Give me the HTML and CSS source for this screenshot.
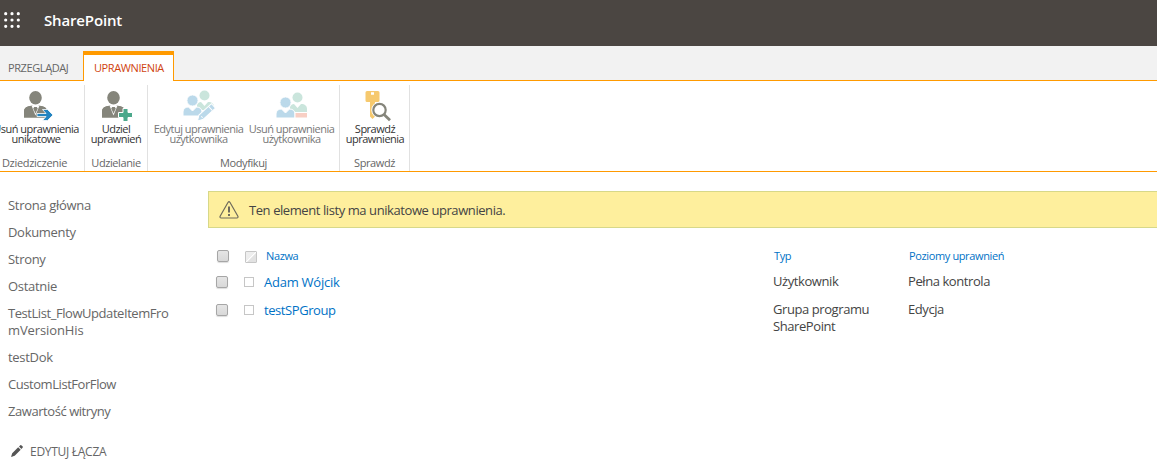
FILE: index.html
```html
<!DOCTYPE html>
<html lang="pl">
<head>
<meta charset="utf-8">
<title>SharePoint</title>
<link rel="stylesheet" href="styles.css">
</head>
<body>
<svg class="defs" width="0" height="0" aria-hidden="true">
  <symbol id="person" viewBox="0 0 23 28">
    <ellipse cx="11.500" cy="6.800" rx="6.300" ry="6.800"/>
    <path d="M0 26.500v-6c0-3 1.700-4.600 4.700-5.300l4-.7 2.800 8 2.800-8 4 .7c3 .7 4.700 2.300 4.700 5.300v6z"/>
    <path d="M0 26.500v-6c0-3 1.700-4.600 4.700-5.300l2.800-.5 4 9.500 4-9.500 2.800.5c3 .7 4.700 2.300 4.700 5.300v6z"/>
    <path d="M7.500 14.500h8l-4 10z" fill="#fff"/>
    <path d="M10.200 16h2.600l1 1.500-2.300 5-2.300-5z"/>
  </symbol>
  <symbol id="people" viewBox="0 0 32 28">
    <g fill="#cae5dc"><circle cx="21.500" cy="5.500" r="5"/><path d="M14 20v-5c1-2 2-3 4-3l3.500 4 3.500-4c4 0 6 2 6 5v3z"/></g>
    <g fill="#bbd9ea"><circle cx="9.500" cy="10.500" r="5.600" stroke="#fff"/><path stroke="#fff" d="M0 26v-4c0-3 2-5 5.500-5l4 4 4-4c3.500 0 5.500 2 5.500 5v4z"/></g>
  </symbol>
</svg>
<header class="suite">
  <svg class="waffle" width="16" height="16" viewBox="0 0 16 16" fill="none" stroke="#fff" stroke-width="3.200" stroke-linecap="round"><path d="M1.700 1.700h0M8 1.700h0M14.300 1.700h0M1.700 8h0M8 8h0M14.300 8h0M1.700 14.300h0M8 14.300h0M14.300 14.300h0"/></svg>
  <span class="brand">SharePoint</span>
</header>
<nav class="tabs">
  <span class="tab">PRZEGLĄDAJ</span>
  <span class="tab active">UPRAWNIENIA</span>
</nav>
<section class="ribbon">
  <div class="group g1">
    <div class="commands">
      <div class="command">
        <svg class="icon" width="34" height="32" viewBox="0 0 34 32"><use href="#person" x="3" y="1" width="23" height="28" fill="#85857b"/><path d="M16 23.500h9l-3.500-4h5l5.500 5.500-5.500 5.500h-5l3.500-4H16z" fill="#2384c0" stroke="#fff" stroke-width=".8"/></svg>
        <span class="label">Usuń uprawnienia<br>unikatowe</span>
      </div>
    </div>
    <div class="caption">Dziedziczenie</div>
  </div>
  <div class="group g2">
    <div class="commands">
      <div class="command">
        <svg class="icon" width="34" height="32" viewBox="0 0 34 32"><use href="#person" x="3" y="1" width="23" height="28" fill="#85857b"/><path d="M24 18.500h5v4h4.500v5H29v4h-5v-4h-4.500v-5H24z" fill="#4ba88b" stroke="#fff"/></svg>
        <span class="label">Udziel<br>uprawnień</span>
      </div>
    </div>
    <div class="caption">Udzielanie</div>
  </div>
  <div class="group g3">
    <div class="commands">
      <div class="command disabled">
        <svg class="icon" width="34" height="32" viewBox="0 0 34 32"><use href="#people" x="1" y="0" width="32" height="28"/><g transform="translate(15.500 31) rotate(-42)"><path d="M0 0l5-3.500h17v6H5z" fill="#bbd9ea" stroke="#fff"/><path d="M6-1v2M18-3v5" stroke="#fff"/></g></svg>
        <span class="label">Edytuj uprawnienia<br>użytkownika</span>
      </div>
      <div class="command disabled">
        <svg class="icon" width="34" height="32" viewBox="0 0 34 32"><use href="#people" x="1" y="2" width="32" height="28"/><path d="M20 22.500h12.500V28H20z" fill="#f8cfc4" stroke="#fff"/></svg>
        <span class="label">Usuń uprawnienia<br>użytkownika</span>
      </div>
    </div>
    <div class="caption">Modyfikuj</div>
  </div>
  <div class="group g4">
    <div class="commands">
      <div class="command">
        <svg class="icon" width="34" height="32" viewBox="0 0 34 32"><path fill-rule="evenodd" d="M9 1h11a1.500 1.500 0 0 1 1.500 1.500v8A1.500 1.500 0 0 1 20 12h-3v14.500L14.500 29 12 26.500V12H9a1.500 1.500 0 0 1-1.500-1.500v-8A1.500 1.500 0 0 1 9 1zm4 1.300v2.400h3V2.300z" fill="#f6c96e"/><circle cx="21.500" cy="20" r="6.200" fill="#fff" stroke="#fff" stroke-width="4"/><circle cx="21.500" cy="20" r="6.200" fill="#fff" stroke="#85857b" stroke-width="2.200"/><path d="M26 24.500l6 5.700" stroke="#85857b" stroke-width="2.800"/></svg>
        <span class="label">Sprawdź<br>uprawnienia</span>
      </div>
    </div>
    <div class="caption">Sprawdź</div>
  </div>
</section>
<main class="body">
  <aside class="side">
    <a>Strona główna</a>
    <a>Dokumenty</a>
    <a>Strony</a>
    <a>Ostatnie</a>
    <a><span class="tight">TestList_FlowUpdateItemFro</span><br><span class="loose">mVersionHis</span></a>
    <a>testDok</a>
    <a class="tight">CustomListForFlow</a>
    <a class="tight">Zawartość witryny</a>
    <div class="edit"><svg width="12" height="12" viewBox="0 0 12 12" fill="#555"><path d="M0 12l1.200-3.700 6-6 2.500 2.500-6 6zM8 1.500L9.300.2q.5-.4 1 0l1.400 1.400q.5.500 0 1L10.400 4z"/></svg><span>EDYTUJ ŁĄCZA</span></div>
  </aside>
  <section class="content">
    <div class="notice">
      <svg width="20" height="18" viewBox="0 0 20 18" fill="none" stroke="#6e6a5c" stroke-width="1.200" stroke-linejoin="round"><path d="M9.100 1.300q.9-1.200 1.800 0l8 14q.5 1.600-1.100 1.700H2.200Q.6 16.900 1.100 15.300z"/><path d="M10 5.500v6M10 13v2" stroke-width="2"/></svg>
      <span>Ten element listy ma unikatowe uprawnienia.</span>
    </div>
    <div class="table">
      <div class="row head"><i class="check"></i><i class="pic"></i><span class="name">Nazwa</span><span>Typ</span><span>Poziomy uprawnień</span></div>
      <div class="row"><i class="check"></i><i class="presence"></i><span class="name user">Adam Wójcik</span><span>Użytkownik</span><span>Pełna kontrola</span></div>
      <div class="row"><i class="check"></i><i class="presence"></i><span class="name">testSPGroup</span><span>Grupa programu<br>SharePoint</span><span>Edycja</span></div>
    </div>
  </section>
</main>
</body>
</html>
```
FILE: styles.css
```css
* { box-sizing: border-box; }
body { margin: 0; width: 1157px; height: 468px; overflow: hidden; background: #fff; color: #444; font: 13px/17px "Open Sans", "Noto Sans", sans-serif; }
.defs { display: block; }
.suite { height: 46px; background: #4b4642; display: flex; align-items: flex-start; padding: 12px 0 0 4px; }
.waffle { display: block; }
.brand { margin-left: 24px; color: #fff; font-size: 15px; font-weight: 600; line-height: 17px; letter-spacing: -.15px; }
.tabs { height: 35px; background: #f2f2f2; border-bottom: 1px solid #ff9a00; padding-top: 5px; display: flex; font-size: 11px; letter-spacing: -.4px; color: #666; }
.tab { width: 83px; height: 30px; padding: 8px 0 0 8px; white-space: nowrap; }
.tab.active { width: 91px; background: #fff; border: 1px solid #ff9a00; border-top-width: 4px; border-bottom: 0; color: #d0440f; padding: 4px 0 0 10px; }
.ribbon { height: 91px; padding-top: 4px; border-bottom: 1px solid #ff9a00; display: flex; }
.group { height: 86px; border-right: 1px solid #e1e1e1; display: flex; flex-direction: column; justify-content: space-between; align-items: center; flex: none; }
.g1 { width: 85px; padding-right: 15px; }
.g2 { width: 63px; }
.g3 { width: 192px; }
.g4 { width: 70px; }
.commands { display: flex; justify-content: center; }
.command { display: flex; flex-direction: column; align-items: center; padding-top: 5px; }
.g1 .command { margin-left: 3px; }
.g1 .icon { margin-left: 3px; }
.g3 .commands { padding-left: 3px; }
.g3 .command { width: 93px; }
.g4 .command { padding-left: 1px; }
.icon { display: block; }
.label { font-size: 11px; line-height: 10px; letter-spacing: -.5px; text-align: center; white-space: nowrap; color: #333; padding-top: 2px; }
.disabled .label { color: #777; }
.caption { font-size: 11px; line-height: 15px; letter-spacing: -.4px; color: #666; white-space: nowrap; margin-bottom: 1px; }
.g1 .caption { letter-spacing: -.3px; }
.body { display: flex; letter-spacing: -.42px; }
.side { width: 208px; flex: none; padding: 25px 0 0 8px; color: #666; letter-spacing: -.31px; }
.side a { display: block; margin-bottom: 10px; white-space: nowrap; }
.side .tight { letter-spacing: -.44px; }
.side .loose { letter-spacing: -.1px; }
.edit { margin: 23px 0 0 3px; display: flex; gap: 7px; align-items: center; font-size: 12px; letter-spacing: -.28px; }
.edit svg { margin-top: -2px; }
.content { flex: 1; padding-top: 19px; }
.notice { height: 37px; border: 1px solid #d7d889; border-right: 0; background: #feef9d; display: flex; align-items: center; padding-left: 10px; gap: 10px; }
.notice span { padding-top: 2px; }
.table { padding-top: 19px; }
.row { display: grid; grid-template-columns: 33px 23px 509px 135px 1fr; margin-bottom: 10px; }
.head { color: #0072c6; font-size: 11px; margin-bottom: 9px; letter-spacing: -.37px; }
.head > span { padding-left: 1px; }
.name { color: #0072c6; padding-top: 1px; }
.user { letter-spacing: -.25px; }
.head .name { padding: 0 0 0 2px; }
.check { width: 12px; height: 12px; margin: 3px 0 0 8px; border: 1px solid #a6a6a6; border-radius: 2px; background: linear-gradient(#e5e5e5, #d8d8d8); box-shadow: 0 1px 1px #ddd; }
.head .check { margin: 3px 0 0 9px; }
.presence { width: 10px; height: 10px; margin: 4px 0 0 3px; border: 1px solid #c6c6c6; }
.pic { width: 12px; height: 12px; margin: 4px 0 0 4px; border: 1px solid #c6c6c6; border-radius: 1px; background: linear-gradient(135deg, #eee 48%, #fff 50%, #e2e2e2 60%); }
```
